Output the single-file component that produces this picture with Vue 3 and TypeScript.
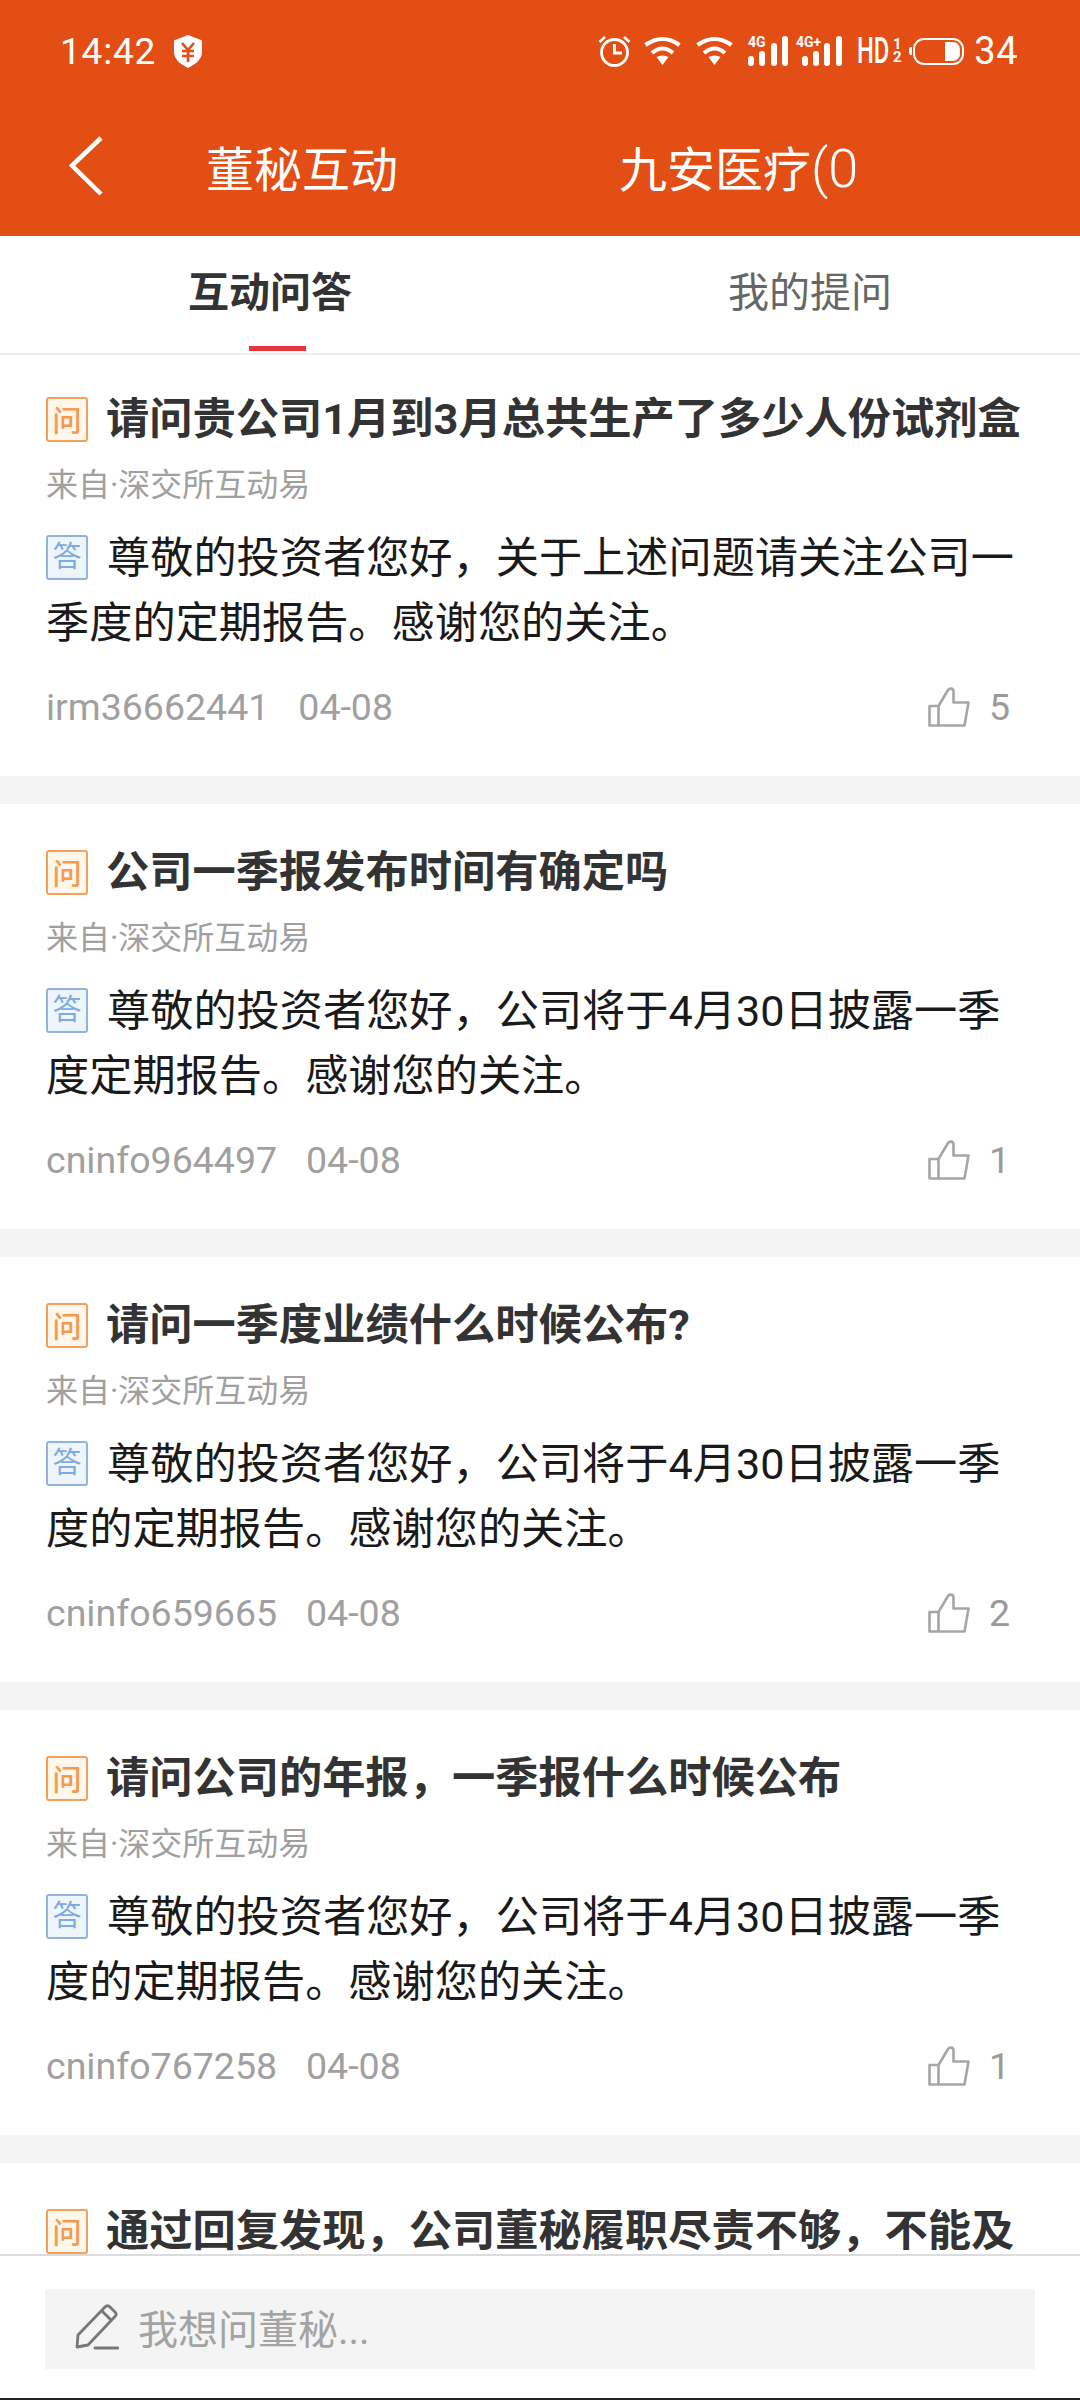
<script setup lang="ts">
interface QaItem {
  question: string;
  answer: string;
  user: string;
  date: string;
  likes: number;
}

const items: QaItem[] = [
  {
    question: '请问贵公司1月到3月总共生产了多少人份试剂盒',
    answer: '尊敬的投资者您好，关于上述问题请关注公司一季度的定期报告。感谢您的关注。',
    user: 'irm36662441',
    date: '04-08',
    likes: 5,
  },
  {
    question: '公司一季报发布时间有确定吗',
    answer: '尊敬的投资者您好，公司将于4月30日披露一季度定期报告。感谢您的关注。',
    user: 'cninfo964497',
    date: '04-08',
    likes: 1,
  },
  {
    question: '请问一季度业绩什么时候公布?',
    answer: '尊敬的投资者您好，公司将于4月30日披露一季度的定期报告。感谢您的关注。',
    user: 'cninfo659665',
    date: '04-08',
    likes: 2,
  },
  {
    question: '请问公司的年报，一季报什么时候公布',
    answer: '尊敬的投资者您好，公司将于4月30日披露一季度的定期报告。感谢您的关注。',
    user: 'cninfo767258',
    date: '04-08',
    likes: 1,
  },
  {
    question: '通过回复发现，公司董秘履职尽责不够，不能及',
    answer: '',
    user: '',
    date: '',
    likes: 0,
  },
];
</script>

<template>
  <div class="page">
    <header class="head">
      <div class="status">
        <span class="time">14:42</span>
        <svg class="shield" width="28" height="33" viewBox="0 0 28 33">
          <path d="M14 0 L27 5 C28 5 28 6 28 7 V17 C28 25 20 30 14 33 C8 30 0 25 0 17 V7 C0 6 0 5 1 5 Z" fill="#fff" />
          <path d="M8 8 L14 15 L20 8 M8 16 H20 M8 21 H20 M14 15 V27" stroke="#e34e14" stroke-width="2.6" fill="none" />
        </svg>
        <div class="status-right">
          <svg width="33" height="32" viewBox="0 0 33 32" fill="none" stroke="#fff">
            <circle cx="16.5" cy="17.5" r="13" stroke-width="2.8" />
            <path d="M16.5 9 V18 H24" stroke-width="3" />
            <path d="M1.5 7 L7 2 M31.5 7 L26 2" stroke-width="2.6" />
          </svg>
          <svg class="wifi-a" width="37" height="30" viewBox="0 0 37 30" fill="none" stroke="#fff" stroke-width="4">
            <path d="M1.5 9 Q18.5 -3 35.5 9" />
            <path d="M8 17 Q18.5 8 29 17" />
            <path d="M12.5 21 Q18.5 18 24.5 21 L18.5 29 Z" fill="#fff" stroke="none" />
          </svg>
          <svg class="wifi-b" width="37" height="30" viewBox="0 0 37 30" fill="none" stroke="#fff" stroke-width="4">
            <path d="M1.5 9 Q18.5 -3 35.5 9" />
            <path d="M8 17 Q18.5 8 29 17" />
            <path d="M12.5 21 Q18.5 18 24.5 21 L18.5 29 Z" fill="#fff" stroke="none" />
          </svg>
          <svg class="sig sig-a" width="40" height="30" viewBox="0 0 40 30" fill="#fff">
            <text x="0" y="11" class="sig-text">4G</text>
            <rect x="0" y="20" width="6" height="10" rx="3" />
            <rect x="11" y="15" width="6" height="15" rx="3" />
            <rect x="23" y="7" width="6" height="23" rx="3" />
            <rect x="34" y="0" width="6" height="30" rx="3" />
          </svg>
          <svg class="sig sig-b" width="46" height="30" viewBox="0 0 46 30" fill="#fff">
            <text x="0" y="11" class="sig-text">4G+</text>
            <rect x="6" y="20" width="6" height="10" rx="3" />
            <rect x="17" y="15" width="6" height="15" rx="3" />
            <rect x="28" y="7" width="6" height="23" rx="3" />
            <rect x="40" y="0" width="6" height="30" rx="3" />
          </svg>
          <div class="hd">
            <span class="hd-main">HD</span>
            <span class="hd-sub"><i>1</i><i>2</i></span>
          </div>
          <div class="battery">
            <span class="battery-cap"></span>
            <span class="battery-body"><span class="battery-fill"></span></span>
          </div>
          <span class="level">34</span>
        </div>
      </div>
      <div class="nav">
        <svg class="back" width="36" height="60" viewBox="0 0 36 60" fill="none" stroke="#fff" stroke-width="4.5">
          <path d="M33 2 L4 29.5 L33 58" />
        </svg>
        <span class="nav-title">董秘互动</span>
        <span class="nav-stock">九安医疗<span class="nav-code">(0</span></span>
      </div>
    </header>

    <div class="tabs">
      <div class="tab active">互动问答<span class="tab-line"></span></div>
      <div class="tab">我的提问</div>
    </div>

    <div class="list">
      <article v-for="(item, i) in items" :key="i" class="card">
        <div class="question">
          <span class="badge badge-q">问</span>
          <h3>{{ item.question }}</h3>
        </div>
        <template v-if="item.answer">
          <div class="source">来自·深交所互动易</div>
          <p class="answer"><span class="badge badge-a">答</span>{{ item.answer }}</p>
          <div class="foot">
            <span class="user">{{ item.user }}</span>
            <span class="date">{{ item.date }}</span>
            <svg class="thumb" width="42" height="40" viewBox="0 0 42 40" fill="none" stroke="#a6a6a6" stroke-width="2.6" stroke-linejoin="round">
              <path d="M10.5 19 H1.5 V38.5 H10.5 Z" />
              <path d="M10.5 19 L20 3 C21.5 1 25 1 25.5 4 V15.5 H40.5 L36.5 38.5 H10.5" />
            </svg>
            <span class="likes">{{ item.likes }}</span>
          </div>
        </template>
      </article>
    </div>

    <footer class="bar">
      <div class="input">
        <svg width="44" height="46" viewBox="0 0 44 46" fill="none" stroke="#777" stroke-width="2.8" stroke-linejoin="round">
          <path d="M3 31 L30 3 C31.5 1.5 33.5 1.5 35 3 L40 8 C41.5 9.5 41.5 11 40 12.5 L13 41 L2 43 Z" />
          <path d="M27 7 L36 16" />
          <path d="M20 44 H43" stroke-linecap="round" />
        </svg>
        <span>我想问董秘...</span>
      </div>
    </footer>
  </div>
</template>

<style>
html, body {
  margin: 0;
  background: #fff;
}
</style>

<style scoped>
.page {
  width: 1080px;
  height: 2400px;
  display: flex;
  flex-direction: column;
  overflow: hidden;
  font-family: Roboto, "Noto Sans CJK SC", sans-serif;
  background: #f4f4f4;
}

.head {
  flex: none;
  height: 236px;
  background: #e34e14;
  color: #fff;
}

.status {
  height: 102px;
  padding: 0 62px 0 60px;
  display: flex;
  align-items: center;
}

.time {
  font-size: 37px;
  letter-spacing: 0.8px;
}

.shield {
  margin-left: 18px;
}

.status-right {
  margin-left: auto;
  display: flex;
  align-items: center;
}

.wifi-a {
  margin-left: 13px;
}

.wifi-b,
.sig-a {
  margin-left: 15px;
}

.sig {
  overflow: visible;
}

.sig-b {
  margin-left: 8px;
}

.sig-text {
  font-size: 14px;
  font-weight: 700;
}

.hd {
  margin-left: 15px;
  width: 44px;
  display: flex;
  align-items: center;
}

.hd-main {
  width: 36px;
  font-size: 36px;
  font-weight: 500;
  line-height: 1;
  transform: scaleX(0.66);
  transform-origin: left center;
}

.hd-sub {
  display: flex;
  flex-direction: column;
  align-items: center;
  width: 8px;
  font-size: 15px;
  line-height: 13px;
  font-weight: 700;
}

.hd-sub i {
  font-style: normal;
}

.battery {
  margin-left: 8px;
  display: flex;
  align-items: center;
}

.battery-cap {
  width: 3px;
  height: 8px;
  margin-right: 1px;
  background: #fff;
  border-radius: 2px 0 0 2px;
}

.battery-body {
  box-sizing: border-box;
  width: 51px;
  height: 27px;
  border: 2px solid #fff;
  border-radius: 11px;
  padding: 2px;
  display: flex;
  justify-content: flex-end;
}

.battery-fill {
  width: 15px;
  background: #fff;
  border-radius: 0 7px 7px 0;
}

.level {
  margin-left: 10px;
  font-size: 38px;
  letter-spacing: 0.5px;
}

.nav {
  height: 134px;
  display: flex;
  align-items: center;
  padding-bottom: 6px;
  box-sizing: border-box;
  font-size: 48px;
}

.back {
  margin-left: 68px;
}

.nav-title {
  margin-left: 102px;
  width: 413px;
}

.nav-stock {
  white-space: nowrap;
}

.nav-code {
  font-size: 54px;
  font-weight: 300;
}

.tabs {
  flex: none;
  height: 117px;
  display: flex;
  background: #fff;
  border-bottom: 2px solid #eeeeee;
}

.tab {
  flex: 1;
  position: relative;
  display: flex;
  align-items: center;
  justify-content: center;
  padding-bottom: 12px;
  font-size: 41px;
  color: #666;
}

.tab.active {
  color: #333;
  font-weight: 700;
}

.tab-line {
  position: absolute;
  left: 249px;
  bottom: 2px;
  width: 57px;
  height: 5px;
  background: #e6343a;
}

.list {
  flex: 1;
  min-height: 0;
  overflow: hidden;
  display: flex;
  flex-direction: column;
  gap: 28px;
}

.card {
  flex: none;
  background: #fff;
  padding: 46px 45px 0 46px;
  height: 425px;
  box-sizing: border-box;
}

.card:first-child {
  height: 421px;
  padding-top: 42px;
}

.question {
  display: flex;
  align-items: center;
  height: 44px;
}

.question h3 {
  margin: 0 0 9px 18px;
  font-size: 43.25px;
  font-weight: 700;
  color: #333;
  white-space: nowrap;
}

.badge {
  flex: none;
  box-sizing: border-box;
  width: 42px;
  height: 45px;
  border-radius: 3px;
  font-size: 29px;
  display: inline-flex;
  align-items: center;
  justify-content: center;
}

.badge-q {
  border: 2px solid #f5a058;
  background: #fff6ec;
  color: #f5994c;
  font-weight: 500;
}

.badge-a {
  border: 2px solid #8fb4e2;
  background: #eef5fd;
  color: #80abe0;
  font-weight: 400;
  margin-right: 19px;
  vertical-align: 6px;
}

.source {
  margin-top: 24px;
  font-size: 32px;
  line-height: 40px;
  color: #a0a0a0;
}

.answer {
  margin: 21px 0 0;
  width: 990px;
  font-size: 43.2px;
  line-height: 65px;
  color: #1a1a1a;
}

.foot {
  margin-top: 29px;
  display: flex;
  align-items: center;
  font-size: 37.5px;
  color: #a0a0a0;
  height: 44px;
}

.date {
  margin-left: 29px;
}

.thumb {
  margin-left: auto;
}

.likes {
  width: 22px;
  margin-left: 19px;
  margin-right: 24px;
  color: #9a9a9a;
}

.bar {
  flex: none;
  height: 146px;
  box-sizing: border-box;
  background: #fff;
  border-top: 2px solid #dcdcdc;
  border-bottom: 2px solid #222;
  padding: 33px 45px 0;
}

.input {
  height: 80px;
  box-sizing: border-box;
  background: #f4f4f4;
  display: flex;
  align-items: center;
  padding: 0 0 4px 30px;
  font-size: 40px;
  color: #a3a3a3;
}

.input span {
  margin-left: 19px;
}
</style>
